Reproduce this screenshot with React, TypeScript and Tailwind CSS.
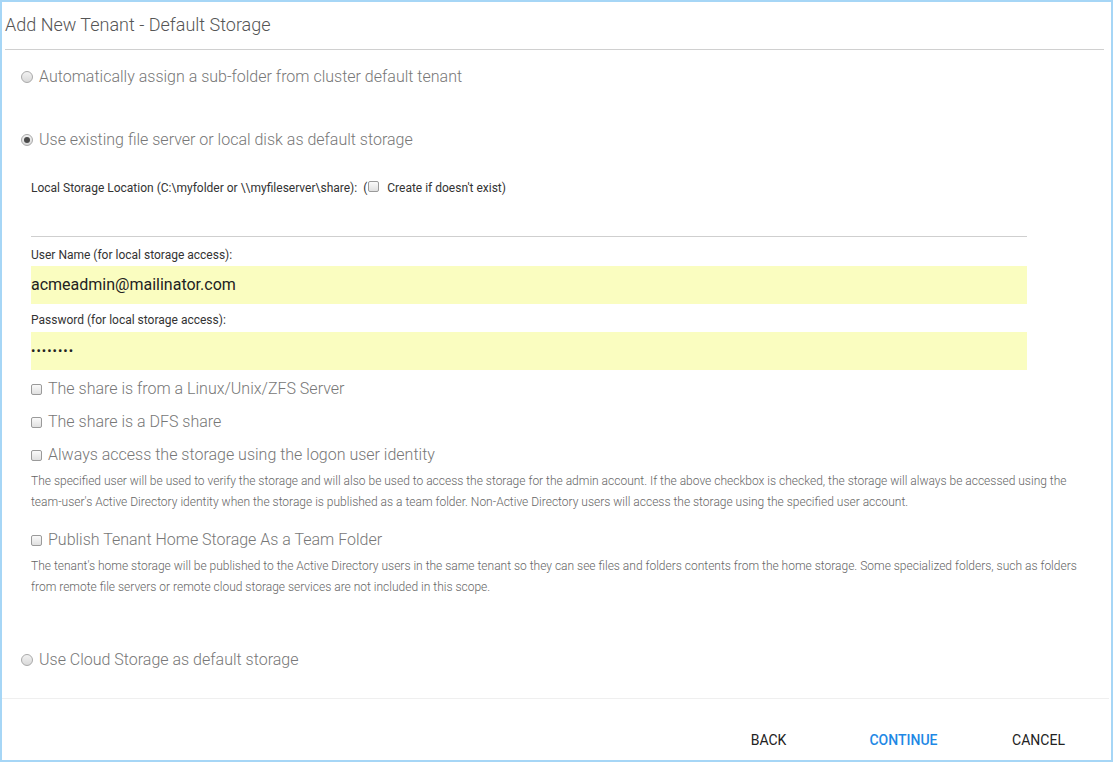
const Radio = ({ checked = false }: { checked?: boolean }) => (
  <span className="flex h-[12px] w-[12px] shrink-0 items-center justify-center rounded-full border border-[#a9a9a9] bg-gradient-to-b from-[#f2f2f2] to-[#d9d9d9]">
    {checked && <span className="h-[6px] w-[6px] rounded-full bg-[#4a4a4a]" />}
  </span>
)

const Check = () => (
  <span className="block h-[11px] w-[11px] shrink-0 rounded-[2px] border border-[#9a9a9a] bg-gradient-to-b from-[#fafafa] to-[#e0e0e0]" />
)

const RadioRow = ({ label, checked, className }: { label: string; checked?: boolean; className: string }) => (
  <div className={`flex h-[20px] items-center gap-[6px] pl-[19px] ${className}`}>
    <Radio checked={checked} />
    <span className="text-[16px] font-light text-[#777]">{label}</span>
  </div>
)

const CheckRow = ({ label, className }: { label: string; className: string }) => (
  <div className={`flex h-[20px] items-center gap-[6px] ${className}`}>
    <Check />
    <span className="text-[16px] font-light text-[#777]">{label}</span>
  </div>
)

export default function App() {
  return (
    <div
      className="flex h-[762px] w-[1113px] flex-col border-2 border-[#a6d6f6] bg-white"
      style={{ fontFamily: 'Roboto, "Noto Sans", sans-serif' }}
    >
      <div className="mx-[3px] mr-[7px] flex h-[48px] items-center border-b border-[#d0d0d0]">
        <h1 className="pb-[2px] text-[18px] font-light text-[#555]">Add New Tenant - Default Storage</h1>
      </div>

      <RadioRow className="mt-[17px]" label="Automatically assign a sub-folder from cluster default tenant" />
      <RadioRow className="mt-[43px]" checked label="Use existing file server or local disk as default storage" />

      <div className="flex flex-col pl-[29px] pr-[24px]">
        <div className="mt-[30px] flex h-[16px] items-center text-[12px] text-[#333]">
          <span>Local Storage Location (C:\myfolder or \\myfileserver\share):&nbsp; (</span>
          <span className="ml-[1px] mr-[8px] -mt-[3px]"><Check /></span>
          <span>Create if doesn't exist)</span>
        </div>
        <div className="mt-[40px] h-px w-[996px] bg-[#cfcfcf]" />

        <div className="mt-[10px] flex h-[16px] items-center text-[12px] text-[#333]">
          User Name (for local storage access):
        </div>
        <div className="mt-[3px] flex h-[38px] w-[996px] items-center bg-[#fafdc0] text-[16px] text-[#222]">
          acmeadmin@mailinator.com
        </div>

        <div className="mt-[8px] flex h-[16px] items-center text-[12px] text-[#333]">
          Password (for local storage access):
        </div>
        <div className="mt-[4px] flex h-[38px] w-[996px] items-center bg-[#fafdc0] text-[13px] tracking-[1px] text-[#222]">
          ••••••••
        </div>

        <CheckRow className="mt-[9px]" label="The share is from a Linux/Unix/ZFS Server" />
        <CheckRow className="mt-[13px]" label="The share is a DFS share" />
        <CheckRow className="mt-[13px]" label="Always access the storage using the logon user identity" />
        <p className="mt-[6px] text-[12px] font-light leading-[21px] text-[#666]">
          The specified user will be used to verify the storage and will also be used to access the storage for the admin account. If the above checkbox is checked, the storage will always be accessed using the team-user's Active Directory identity when the storage is published as a team folder. Non-Active Directory users will access the storage using the specified user account.
        </p>

        <CheckRow className="mt-[17px]" label="Publish Tenant Home Storage As a Team Folder" />
        <p className="mt-[6px] text-[12px] font-light leading-[21px] text-[#666]">
          The tenant's home storage will be published to the Active Directory users in the same tenant so they can see files and folders contents from the home storage. Some specialized folders, such as folders from remote file servers or remote cloud storage services are not included in this scope.
        </p>
      </div>

      <RadioRow className="mt-[52px]" label="Use Cloud Storage as default storage" />

      <div className="mt-[28px] mr-[2px] h-px bg-[#efefef]" />

      <div className="mt-[31px] flex justify-end pr-[5px] text-[14px]">
        <button className="w-[135px] text-center text-[#222]">BACK</button>
        <button className="w-[135px] text-center font-medium text-[#1e88e5]">CONTINUE</button>
        <button className="w-[135px] text-center text-[#222]">CANCEL</button>
      </div>
    </div>
  )
}
